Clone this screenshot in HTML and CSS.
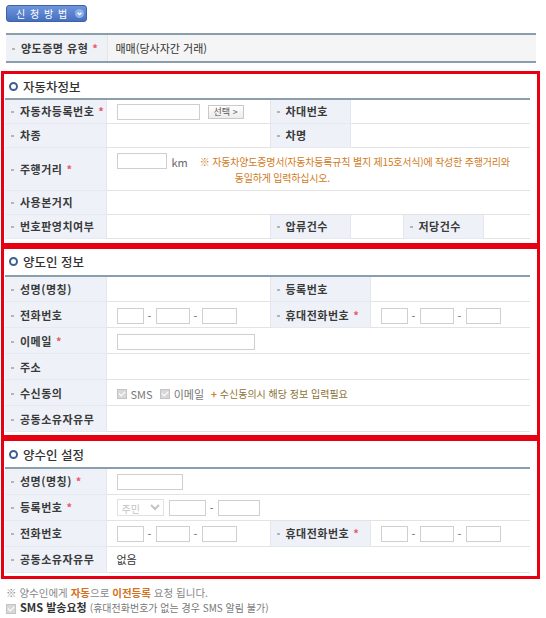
FILE: index.html
```html
<!DOCTYPE html>
<html lang="ko">
<head>
    <meta charset="UTF-8">
    <title>양도증명 신청</title>
    <link rel="stylesheet" href="styles.css">
</head>
<body>
<div class="page">
    <button type="button" class="btn-method">신 청 방 법
        <svg class="btn-arrow" width="9" height="9" viewBox="0 0 9 9"><circle cx="4.5" cy="4.5" r="4.5" fill="#8fb0e8"/><path d="M2.6 3.7 L4.5 5.6 L6.4 3.7" fill="none" stroke="#fff" stroke-width="1.3"/></svg>
    </button>

    <table class="tbl-type">
        <colgroup><col class="c-lbl"><col></colgroup>
        <tr>
            <th><span class="lbl">양도증명 유형</span><em class="req">*</em></th>
            <td>매매(당사자간 거래)</td>
        </tr>
    </table>

    <!-- 자동차정보 -->
    <div class="box box-car">
        <h3 class="box-title"><span class="ico"></span>자동차정보</h3>
        <table class="form">
            <colgroup>
                <col style="width:101px"><col style="width:164px"><col style="width:80px">
                <col style="width:53px"><col style="width:80px"><col>
            </colgroup>
            <tr>
                <th><span class="lbl">자동차등록번호</span><em class="req">*</em></th>
                <td><input type="text" class="ipt w83"> <button type="button" class="btn-sel">선택 &gt;</button></td>
                <th><span class="lbl">차대번호</span></th>
                <td colspan="3"></td>
            </tr>
            <tr>
                <th><span class="lbl">차종</span></th>
                <td></td>
                <th><span class="lbl">차명</span></th>
                <td colspan="3"></td>
            </tr>
            <tr class="tall">
                <th><span class="lbl">주행거리</span><em class="req">*</em></th>
                <td colspan="5">
                    <div class="mileage">
                        <input type="text" class="ipt w50"><span class="unit">km</span>
                        <p class="mileage-note">※ 자동차양도증명서(자동차등록규칙 별지 제15호서식)에 작성한 주행거리와 동일하게 입력하십시오.</p>
                    </div>
                </td>
            </tr>
            <tr>
                <th><span class="lbl">사용본거지</span></th>
                <td colspan="5"></td>
            </tr>
            <tr>
                <th><span class="lbl">번호판영치여부</span></th>
                <td></td>
                <th><span class="lbl">압류건수</span></th>
                <td></td>
                <th><span class="lbl">저당건수</span></th>
                <td></td>
            </tr>
        </table>
    </div>

    <!-- 양도인 정보 -->
    <div class="box">
        <h3 class="box-title"><span class="ico"></span>양도인 정보</h3>
        <table class="form">
            <colgroup>
                <col style="width:101px"><col style="width:164px"><col style="width:100px"><col>
            </colgroup>
            <tr>
                <th><span class="lbl">성명(명칭)</span></th>
                <td></td>
                <th><span class="lbl">등록번호</span></th>
                <td></td>
            </tr>
            <tr>
                <th><span class="lbl">전화번호</span></th>
                <td><input type="text" class="ipt w27"><span class="dash">-</span><input type="text" class="ipt w34"><span class="dash">-</span><input type="text" class="ipt w35"></td>
                <th><span class="lbl">휴대전화번호</span><em class="req">*</em></th>
                <td><input type="text" class="ipt w27"><span class="dash">-</span><input type="text" class="ipt w34"><span class="dash">-</span><input type="text" class="ipt w35"></td>
            </tr>
            <tr>
                <th><span class="lbl">이메일</span><em class="req">*</em></th>
                <td colspan="3"><input type="text" class="ipt w138"></td>
            </tr>
            <tr>
                <th><span class="lbl">주소</span></th>
                <td colspan="3"></td>
            </tr>
            <tr>
                <th><span class="lbl">수신동의</span></th>
                <td colspan="3">
                    <span class="chk"></span><span class="chk-txt">SMS</span>
                    <span class="chk"></span><span class="chk-txt">이메일</span>
                    <span class="agree-note"><b>+</b> 수신동의시 해당 정보 입력필요</span>
                </td>
            </tr>
            <tr>
                <th><span class="lbl">공동소유자유무</span></th>
                <td colspan="3"></td>
            </tr>
        </table>
    </div>

    <!-- 양수인 설정 -->
    <div class="box">
        <h3 class="box-title"><span class="ico"></span>양수인 설정</h3>
        <table class="form">
            <colgroup>
                <col style="width:101px"><col style="width:164px"><col style="width:100px"><col>
            </colgroup>
            <tr>
                <th><span class="lbl">성명(명칭)</span><em class="req">*</em></th>
                <td colspan="3"><input type="text" class="ipt w66"></td>
            </tr>
            <tr>
                <th><span class="lbl">등록번호</span><em class="req">*</em></th>
                <td colspan="3">
                    <select class="sel" disabled><option>주민</option></select>
                    <input type="text" class="ipt w37"><span class="dash">-</span><input type="text" class="ipt w42">
                </td>
            </tr>
            <tr>
                <th><span class="lbl">전화번호</span></th>
                <td><input type="text" class="ipt w27"><span class="dash">-</span><input type="text" class="ipt w34"><span class="dash">-</span><input type="text" class="ipt w35"></td>
                <th><span class="lbl">휴대전화번호</span><em class="req">*</em></th>
                <td><input type="text" class="ipt w27"><span class="dash">-</span><input type="text" class="ipt w34"><span class="dash">-</span><input type="text" class="ipt w35"></td>
            </tr>
            <tr>
                <th><span class="lbl">공동소유자유무</span></th>
                <td colspan="3">없음</td>
            </tr>
        </table>
    </div>

    <p class="foot-note">※ 양수인에게 <strong>자동</strong>으로 <strong>이전등록</strong> 요청 됩니다.</p>
    <p class="foot-sms"><span class="chk"></span><b>SMS 발송요청</b> <small>(휴대전화번호가 없는 경우 SMS 알림 불가)</small></p>
</div>
</body>
</html>
```

FILE: styles.css
```css
body {
    margin: 0;
    padding: 0;
    background-color: #fff;
    color: #333;
    font-family: "Noto Sans CJK KR", "Noto Sans", sans-serif;
    font-size: 11px;
}

.page {
    width: 546px;
    padding-top: 5px;
}

/* 신청방법 버튼 */
.btn-method {
    display: flex;
    align-items: center;
    gap: 7px;
    height: 17px;
    width: 81px;
    margin: 0 0 11px 6px;
    padding: 0 0 0 9px;
    border: 1px solid #3c63a8;
    border-radius: 3px;
    background: linear-gradient(#6e95dd, #4670bf);
    color: #fff;
    font-family: inherit;
    font-size: 10px;
    letter-spacing: 1px;
    white-space: nowrap;
}

/* 양도증명 유형 */
.tbl-type {
    width: 530px;
    margin: 0 0 8px 6px;
    border-collapse: collapse;
    border-top: 2px solid #8b9eae;
    border-bottom: 2px solid #8b9eae;
    background-color: #f5f5f5;
}

.tbl-type .c-lbl {
    width: 101px;
}

.tbl-type th,
.tbl-type td {
    height: 26px;
    padding: 0 0 0 8px;
    text-align: left;
}

.tbl-type th {
    background-color: #eef1f5;
    border-right: 1px solid #e2e5ea;
    padding-left: 6px;
}

/* 빨간 박스 */
.box {
    width: 531px;
    margin-left: 1px;
    padding: 0 2px 3px 0;
    border: 3px solid #e60012;
}

.box-title {
    display: flex;
    align-items: center;
    height: 26px;
    margin: 0;
    padding-left: 5px;
    font-size: 12.5px;
    font-weight: 500;
    color: #333;
}

.box-car {
    padding-bottom: 4px;
}

.box-car .box-title {
    height: 24px;
}

.ico {
    width: 5px;
    height: 5px;
    margin-right: 5px;
    border: 2px solid #3e5f92;
    border-radius: 50%;
    background: #fff;
}

.form {
    width: 525px;
    margin-left: 1px;
    border-collapse: collapse;
    border-top: 2px solid #8b9eae;
    table-layout: fixed;
}

.form tr {
    height: 26px;
}

.box-car .form tr {
    height: 24px;
}

.box-car .form tr.tall {
    height: 43px;
}

.form th,
.form td {
    padding: 0 0 0 10px;
    border-bottom: 1px solid #e3e3e3;
    text-align: left;
    white-space: nowrap;
}

.form th {
    background-color: #eef2f8;
    padding-left: 6px;
    border-right: 1px solid #e3e6ec;
    border-bottom-color: #e6e9ef;
}

.form td + th {
    border-left: 1px solid #e3e6ec;
}

.lbl {
    font-weight: bold;
    color: #3a3a3a;
    letter-spacing: 0.5px;
}

.lbl::before {
    content: "";
    display: inline-block;
    width: 3px;
    height: 2px;
    margin: 0 6px 2px 0;
    background: #b5b5b5;
    vertical-align: middle;
}

.req {
    margin-left: 4px;
    font-style: normal;
    color: #e9586a;
}

/* 입력 */
.ipt {
    box-sizing: border-box;
    height: 16px;
    padding: 0 3px;
    border: 1px solid #cfcfcf;
    background: #fff;
    vertical-align: middle;
    font-size: 11px;
}

.w27 { width: 27px; }
.w34 { width: 34px; }
.w35 { width: 35px; }
.w37 { width: 37px; }
.w42 { width: 42px; }
.w50 { width: 50px; }
.w66 { width: 66px; }
.w83 { width: 83px; }
.w138 { width: 138px; }

.dash {
    display: inline-block;
    width: 12px;
    text-align: center;
    color: #666;
    vertical-align: middle;
}

.btn-sel {
    height: 14px;
    margin-left: 5px;
    padding: 0 5px;
    border: 1px solid #c9c9c9;
    background: linear-gradient(#fff, #ececec);
    color: #555;
    font-family: inherit;
    font-size: 9px;
    line-height: 12px;
    vertical-align: middle;
}

.sel {
    box-sizing: border-box;
    width: 47px;
    height: 17px;
    margin-right: 2px;
    border: 1px solid #d6d6d6;
    background: #fff;
    color: #aaa;
    font-family: inherit;
    font-size: 10px;
    vertical-align: middle;
}

.mileage {
    display: flex;
    align-items: flex-start;
}

.mileage .ipt {
    margin-top: 2px;
}

.unit {
    margin: 3px 0 0 5px;
    color: #666;
}

.mileage-note {
    width: 296px;
    margin: 3px 0 0 12px;
    padding-left: 35px;
    text-indent: -35px;
    white-space: normal;
    word-break: keep-all;
    color: #d07b22;
    font-size: 10px;
    letter-spacing: -0.2px;
    line-height: 16px;
}

/* 체크박스 */
.chk {
    display: inline-block;
    box-sizing: border-box;
    width: 10px;
    height: 10px;
    margin-right: 4px;
    border: 1px solid #c4c4c4;
    background: #d8d8d8;
    vertical-align: middle;
    position: relative;
}

.chk::after {
    content: "";
    position: absolute;
    left: 2px;
    top: 0;
    width: 3px;
    height: 5px;
    border: solid #fff;
    border-width: 0 1.5px 1.5px 0;
    transform: rotate(45deg);
}

.chk-txt {
    margin-right: 4px;
    color: #777;
    vertical-align: middle;
}

.agree-note {
    color: #8d7336;
    font-size: 10px;
    vertical-align: middle;
}

.agree-note b {
    color: #e07a20;
}

/* 하단 안내 */
.foot-note {
    margin: 6px 0 0 6px;
    color: #888;
    font-size: 10.5px;
    line-height: 15px;
}

.foot-note strong {
    color: #d2721f;
}

.foot-sms {
    margin: 0 0 0 6px;
    line-height: 15px;
    color: #333;
}

.foot-sms b {
    color: #333;
}

.foot-sms small {
    color: #777;
    font-size: 10px;
}
```
